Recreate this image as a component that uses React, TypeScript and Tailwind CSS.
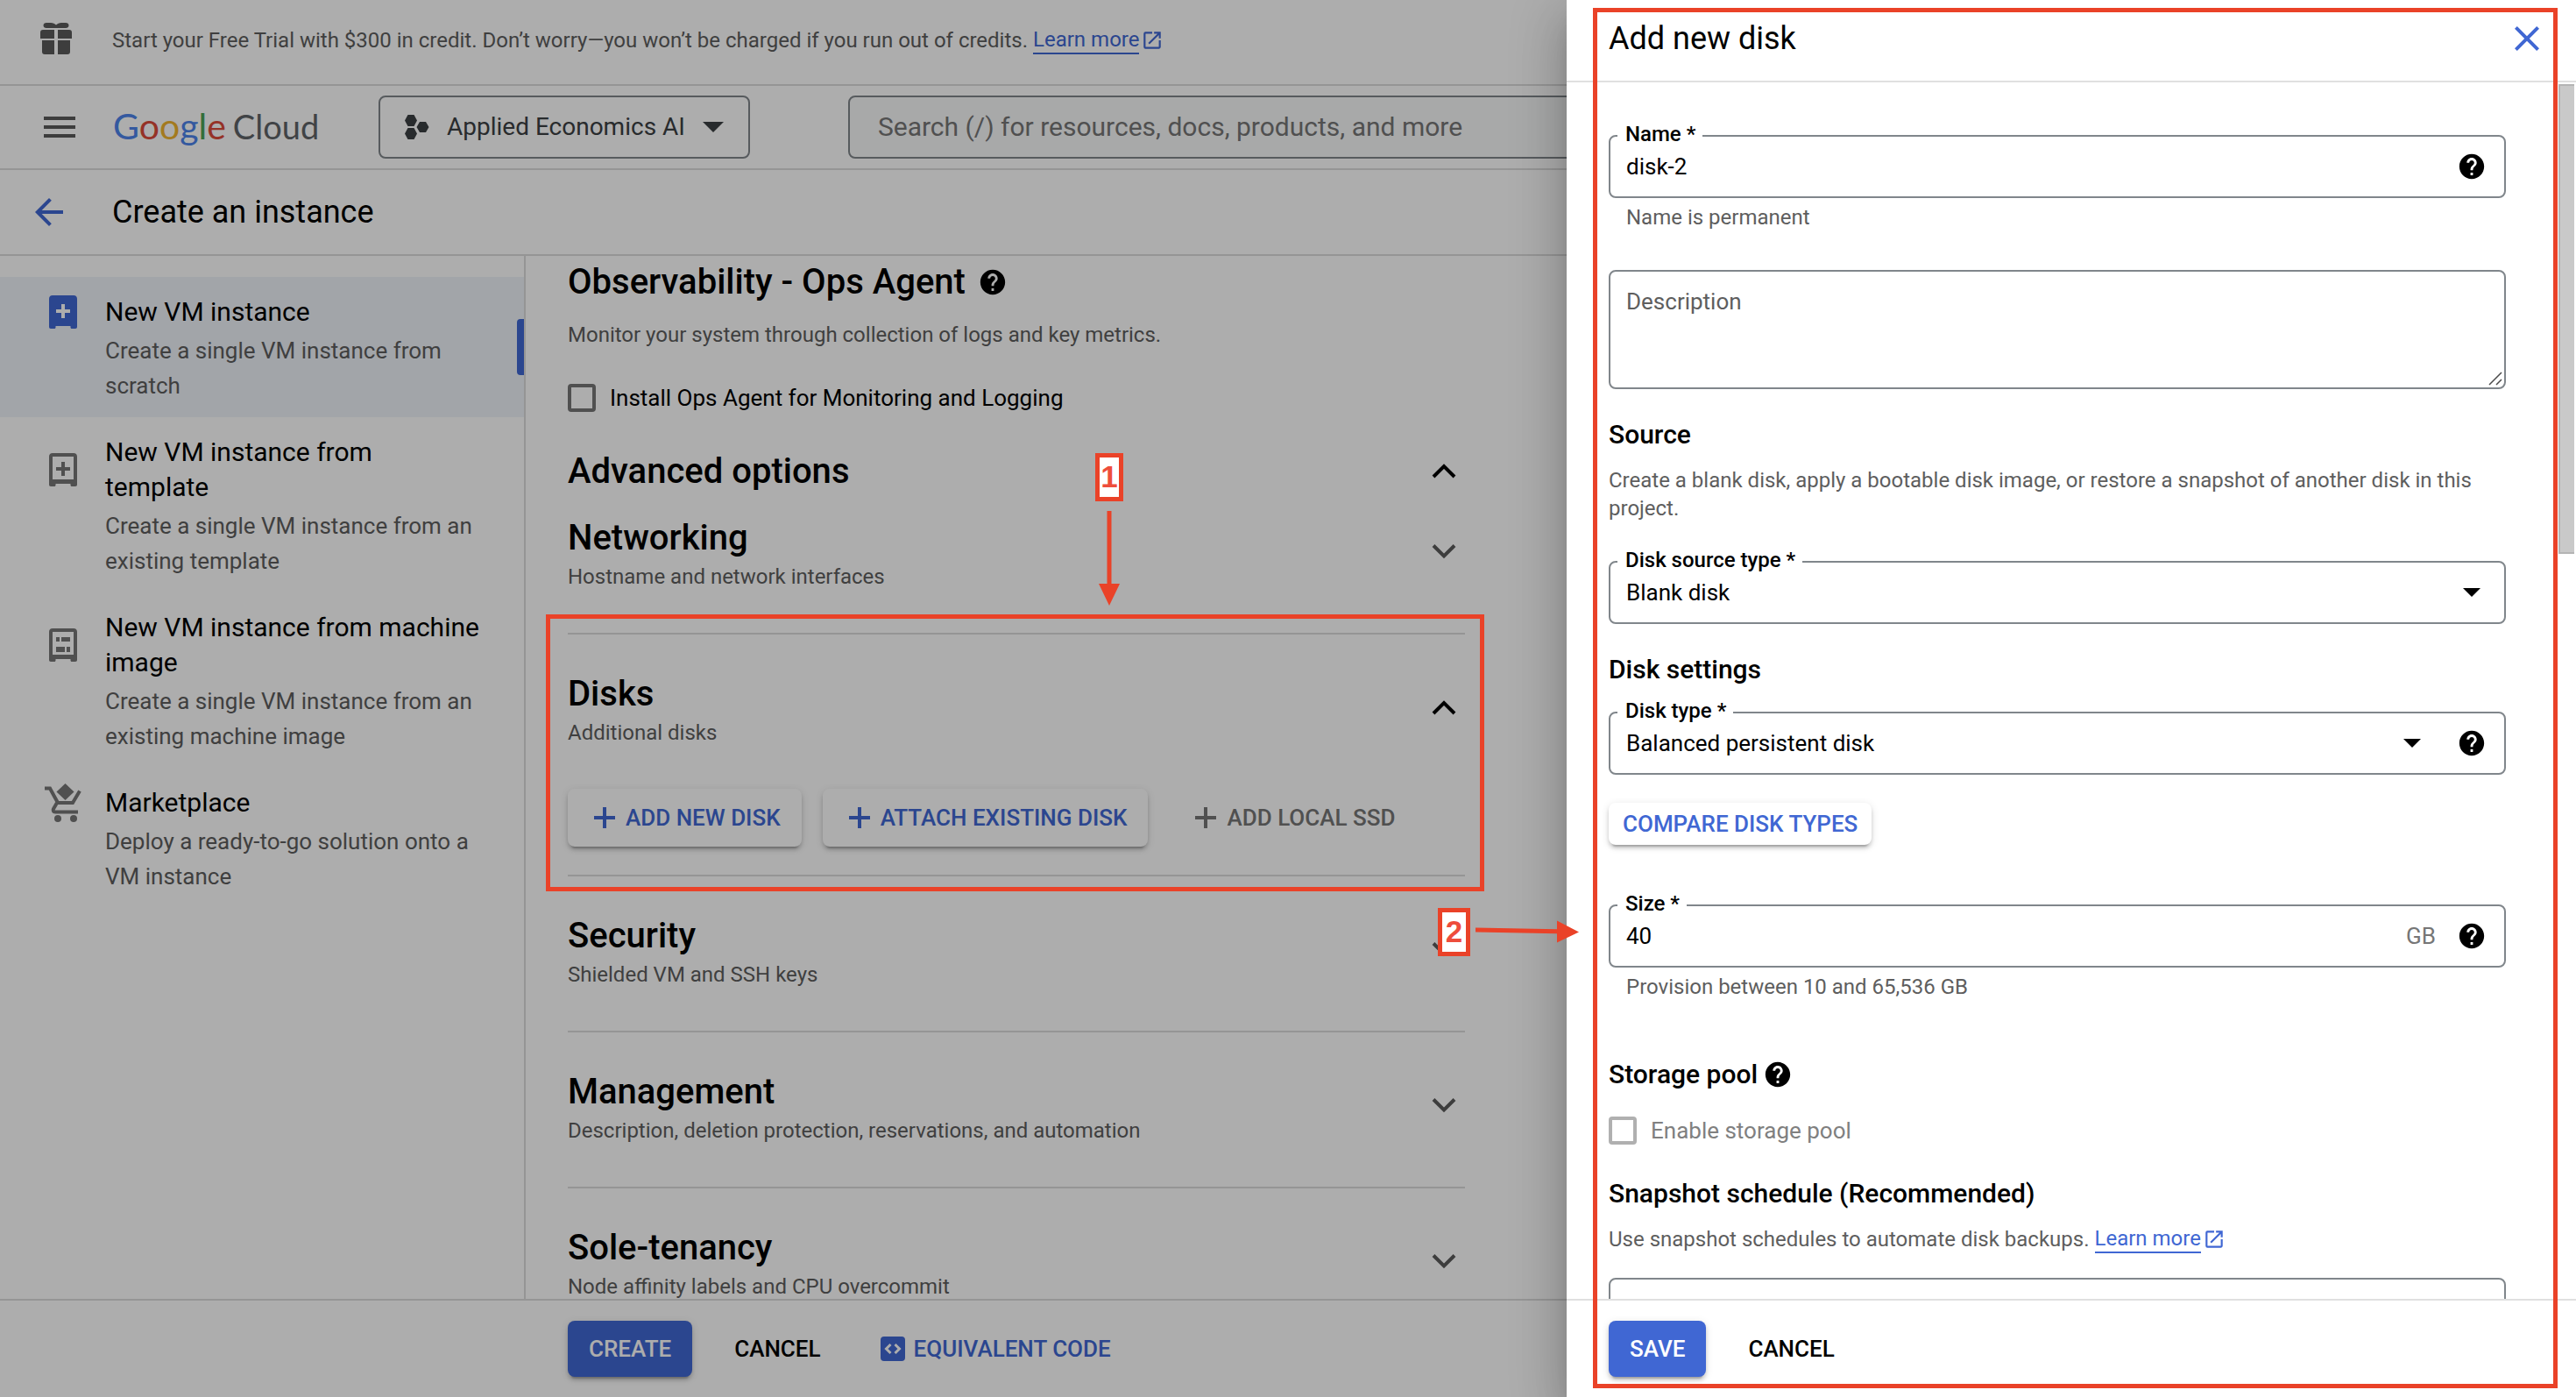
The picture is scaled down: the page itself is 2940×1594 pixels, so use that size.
import type { ReactNode } from "react";
import { MdArrowBack, MdClose, MdHelp, MdMenu, MdOpenInNew } from "react-icons/md";

const raised =
  "rounded-lg shadow-[0_6px_2px_-4px_rgba(0,0,0,0.2),0_4px_4px_0_rgba(0,0,0,0.14),0_2px_10px_0_rgba(0,0,0,0.12)]";

function GiftIcon() {
  return (
    <svg viewBox="0 0 36 36" className="size-9 shrink-0 fill-[#5b5b5b]" aria-hidden="true">
      <path d="M7 0h5c2.500 0 4.500 1 6 2.500C19.500 1 21.500 0 24 0h5c2 0 3.500 1.200 3.500 3S31 6 29 6H7C5 6 3.500 4.800 3.500 3S5 0 7 0z" />
      <path d="M3 8h13v10H0v-7c0-2 1-3 3-3zM20 8h13c2 0 3 1 3 3v7H20z" />
      <path d="M2 20h14v16H5c-2 0-3-1-3-3zM20 20h14v13c0 2-1 3-3 3H20z" />
    </svg>
  );
}

function ProjectIcon() {
  return (
    <svg viewBox="0 0 28 28" className="size-7 fill-[#3c4043]" aria-hidden="true">
      <path d="M3.500 0h7L14 6.500 10.500 13h-7L0 6.500zM3.500 15h7L14 21.500 10.500 28h-7L0 21.500zM17 8h7l3.500 6-3.500 6h-7l-3.500-6z" />
    </svg>
  );
}

function Caret({ className }: { className: string }) {
  return (
    <svg viewBox="0 0 20 10" className={className} aria-hidden="true">
      <path d="M0 0h20L10 10z" />
    </svg>
  );
}

function VmIcon({ kind }: { kind: "solid" | "plus" | "image" }) {
  return (
    <svg viewBox="0 0 32 38" className="h-[38px] w-8" aria-hidden="true">
      {kind === "solid" ? (
        <>
          <path
            fill="#4067d3"
            d="M4 0h24c2.500 0 4 1.500 4 4v32c0 1.300-.7 2-2 2h-4c-1 0-1.500-.6-1.500-1.500V35h-17v1.500c0 .9-.5 1.500-1.500 1.500H2c-1.300 0-2-.7-2-2V4c0-2.500 1.500-4 4-4z"
          />
          <path fill="#fff" d="M14 10h4v6h6v4h-6v6h-4v-6H8v-4h6z" />
        </>
      ) : (
        <path
          fill="#767676"
          fillRule="evenodd"
          d="M4 0h24c2.500 0 4 1.500 4 4v32c0 1.300-.7 2-2 2h-4c-1 0-1.500-.6-1.500-1.500V35h-17v1.500c0 .9-.5 1.500-1.500 1.500H2c-1.300 0-2-.7-2-2V4c0-2.500 1.500-4 4-4zM4 4v26h24V4z"
        />
      )}
      {kind === "plus" && <path fill="#767676" d="M14 10h4v6h6v4h-6v6h-4v-6H8v-4h6z" />}
      {kind === "image" && <path fill="#767676" d="M8 10h4v5H8zM14 10h10v5H14zM8 21h10v6H8zM20 21h4v6h-4z" />}
    </svg>
  );
}

function CartIcon() {
  return (
    <svg viewBox="0 0 42 44" className="h-11 w-[42px]" fill="none" aria-hidden="true">
      <path d="M0 5.500h6L15 22h17l8-13.500" stroke="#767676" strokeWidth="4" />
      <path d="M14 22l-4 7c-1 2 0 3.500 2 3.500h26" stroke="#767676" strokeWidth="4" />
      <path d="M23.500 0l10 9.500-10 9.500-10-9.500z" fill="#767676" />
      <circle cx="15" cy="40" r="4" fill="#767676" />
      <circle cx="33" cy="40" r="4" fill="#767676" />
    </svg>
  );
}

function PlusIcon() {
  return (
    <svg viewBox="0 0 24 24" className="size-6 fill-current" aria-hidden="true">
      <path d="M10 0h4v10h10v4H14v10h-4V14H0v-4h10z" />
    </svg>
  );
}

function Chevron({ open }: { open?: boolean }) {
  return (
    <svg viewBox="0 0 28 18" className="h-[18px] w-7" fill="none" strokeWidth="4" aria-hidden="true">
      {open ? <path d="M2 15l12-12 12 12" stroke="#000" /> : <path d="M2 1.500l12 12 12-12" stroke="#5b5b5b" />}
    </svg>
  );
}

function CodeIcon() {
  return (
    <svg viewBox="0 0 28 28" className="size-7" fill="none" aria-hidden="true">
      <rect width="28" height="28" rx="4" fill="#4067d3" />
      <path d="M11.500 9L6.500 14l5 5M16.500 9l5 5-5 5" stroke="#fff" strokeWidth="3" />
    </svg>
  );
}

function Help() {
  return <MdHelp className="size-[34px] shrink-0 text-black" aria-label="Help" />;
}

function LearnMore() {
  return (
    <a href="#learn-more" className="inline-flex items-center gap-[2px] text-[#4067d3]">
      <span className="border-b-2 border-[#4067d3] leading-[30px]">Learn more</span>
      <MdOpenInNew className="size-[26px]" />
    </a>
  );
}

function NavItem({
  icon,
  title,
  text,
  selected,
}: {
  icon: ReactNode;
  title: string;
  text: string;
  selected?: boolean;
}) {
  return (
    <li className={selected ? "relative bg-[#eff3fa]" : "relative"}>
      <a href="#vm" className="grid grid-cols-[48px_1fr] gap-x-6 gap-y-1 pt-5 pr-[49px] pb-4 pl-12">
        <span className="flex h-10 items-center justify-center self-center">{icon}</span>
        <span className="text-[30px] leading-10 text-black">{title}</span>
        <span className="col-start-2 text-[26px] leading-10 text-[#5e5e5e]">{text}</span>
      </a>
      {selected && <span className="absolute top-12 right-0 h-16 w-2 rounded-l bg-[#4067d3]" />}
    </li>
  );
}

function SectionHeader({ title, text, open }: { title: string; text: string; open?: boolean }) {
  return (
    <button type="button" aria-expanded={!!open} className="flex w-full items-start justify-between text-left">
      <span className="flex flex-col gap-2">
        <span className="text-[40px] leading-10 font-medium text-black">{title}</span>
        <span className="text-2xl leading-8 text-[#5e5e5e]">{text}</span>
      </span>
      <span className="mr-[10px] flex h-[72px] items-center">
        <Chevron open={open} />
      </span>
    </button>
  );
}

function Field({
  id,
  label,
  className,
  children,
}: {
  id: string;
  label: string;
  className: string;
  children: ReactNode;
}) {
  return (
    <div className={className}>
      <div className="relative flex h-[72px] items-center rounded-lg border-2 border-[#80868b] pr-5 pl-[18px] text-[26px]">
        <label
          htmlFor={id}
          className="absolute -top-[15px] left-2 bg-white pr-2 pl-[9px] text-2xl leading-6 font-medium text-black"
        >
          {label}
        </label>
        {children}
      </div>
    </div>
  );
}

const control = "min-w-0 flex-1 appearance-none bg-transparent text-black outline-none";

function Step({ n, className }: { n: number; className: string }) {
  return (
    <span
      className={`absolute z-30 flex h-[55px] items-center justify-center border-[5px] border-[#ea4228] bg-white pb-[2px] font-['Liberation_Sans',sans-serif] text-[35px] leading-none font-bold text-[#ee4d3c] ${className}`}
    >
      {n}
    </span>
  );
}

function DiskDrawer() {
  return (
    <aside
      role="dialog"
      aria-label="Add new disk"
      className="absolute inset-y-0 right-0 z-20 flex w-[1152px] flex-col bg-white shadow-[0_16px_20px_-10px_rgba(0,0,0,0.2),0_32px_48px_4px_rgba(0,0,0,0.14),0_12px_60px_10px_rgba(0,0,0,0.12)]"
    >
      <header className="flex h-[94px] shrink-0 items-center justify-between border-b-2 border-[#e0e0e0] pr-8 pb-1 pl-12">
        <h2 className="text-4xl text-black">Add new disk</h2>
        <button type="button" aria-label="Close" className="text-[#4067d3]">
          <MdClose className="size-12" />
        </button>
      </header>

      <div className="flex min-h-0 flex-1 overflow-hidden">
        <form className="flex min-w-0 flex-1 flex-col pt-[60px] pr-[60px] pl-12">
          <Field id="name" label="Name *" className="">
            <input id="name" defaultValue="disk-2" className={control} />
            <Help />
          </Field>
          <p className="mt-[6px] pl-5 text-2xl leading-8 text-[#5e5e5e]">Name is permanent</p>

          <div className="relative mt-11 h-[136px] shrink-0">
            <textarea
              aria-label="Description"
              placeholder="Description"
              className="block size-full resize-none rounded-lg border-2 border-[#80868b] px-[18px] py-4 text-[26px] leading-9 text-black outline-none placeholder:text-[#5e5e5e]"
            />
            <svg viewBox="0 0 16 16" className="absolute right-1 bottom-1 size-4" stroke="#4a4a4a" strokeWidth="1.500" aria-hidden="true">
              <path d="M1 15L15 1M9 15l6-6" />
            </svg>
          </div>

          <h3 className="mt-8 text-3xl leading-10 font-medium text-black">Source</h3>
          <p className="mt-4 text-2xl leading-8 text-[#5e5e5e]">
            Create a blank disk, apply a bootable disk image, or restore a snapshot of another disk in this project.
          </p>
          <Field id="source" label="Disk source type *" className="mt-11">
            <select id="source" className={control}>
              <option>Blank disk</option>
            </select>
            <span className="flex w-[34px] justify-center">
              <Caret className="h-[10px] w-5" />
            </span>
          </Field>

          <h3 className="mt-8 text-3xl leading-10 font-medium text-black">Disk settings</h3>
          <Field id="type" label="Disk type *" className="mt-7">
            <select id="type" className={control}>
              <option>Balanced persistent disk</option>
            </select>
            <span className="mr-[34px] flex w-[34px] justify-center">
              <Caret className="h-[10px] w-5" />
            </span>
            <Help />
          </Field>
          <button
            type="button"
            className={`mt-8 h-12 shrink-0 self-start px-4 text-[26px] font-medium text-[#4067d3] ${raised}`}
          >
            COMPARE DISK TYPES
          </button>

          <Field id="size" label="Size *" className="mt-[68px]">
            <input id="size" defaultValue="40" className={control} />
            <span className="mr-6 text-[#767676]">GB</span>
            <Help />
          </Field>
          <p className="mt-[6px] pl-5 text-2xl leading-8 text-[#5e5e5e]">Provision between 10 and 65,536 GB</p>

          <h3 className="mt-16 flex items-center gap-[6px] text-3xl leading-10 font-medium text-black">
            Storage pool <Help />
          </h3>
          <label className="mt-7 flex items-center gap-4 text-[26px] leading-8 text-[#808080]">
            <input type="checkbox" disabled className="size-8 appearance-none rounded border-4 border-[#b0b0b0]" />
            Enable storage pool
          </label>

          <h3 className="mt-9 text-3xl leading-10 font-medium text-black">Snapshot schedule (Recommended)</h3>
          <p className="mt-4 flex items-center gap-[6px] text-2xl leading-8 text-[#5e5e5e]">
            Use snapshot schedules to automate disk backups. <LearnMore />
          </p>
          <select
            aria-label="Snapshot schedule"
            className="mt-7 h-[72px] shrink-0 appearance-none rounded-lg border-2 border-[#80868b]"
          />
        </form>
        <div className="w-5 shrink-0 pt-[2px]">
          <div className="h-[536px] w-[18px] border-y-2 border-l-2 border-[#b4b4b4] bg-[#c9c9c9]" />
        </div>
      </div>

      <footer className="flex h-28 shrink-0 items-center gap-6 border-t-2 border-[#e0e0e0] bg-white pl-12 text-[26px] font-medium">
        <button type="button" className={`h-16 bg-[#4067d3] px-6 text-white ${raised}`}>
          SAVE
        </button>
        <button type="button" className="h-16 px-6 text-black">
          CANCEL
        </button>
      </footer>
      <div className="pointer-events-none absolute top-[9px] right-[21px] bottom-[10px] left-[30px] border-[5px] border-[#ea4228]" />
    </aside>
  );
}

export default function App() {
  return (
    <div className="relative flex h-screen flex-col overflow-hidden bg-white font-[Roboto,sans-serif] text-[#5e5e5e]">
      <div className="flex h-[98px] shrink-0 items-center border-b-2 border-[#dcdcdc] pb-2 pl-[46px] text-2xl">
        <GiftIcon />
        <p className="ml-[46px] flex items-center gap-[6px] pt-1">
          Start your Free Trial with $300 in credit. Don’t worry—you won’t be charged if you run out of credits.{" "}
          <LearnMore />
        </p>
      </div>

      <header className="flex h-24 shrink-0 items-center border-b-2 border-[#dcdcdc] pl-11">
        <button type="button" aria-label="Main menu">
          <MdMenu className="size-12 text-[#5b5b5b]" />
        </button>
        <a
          href="#home"
          aria-label="Google Cloud"
          className="ml-[37px] flex w-[231px] items-baseline gap-2 pb-[2px] font-[Lato,sans-serif] text-[41px] whitespace-nowrap"
        >
          <span>
            <span className="text-[#4d84ea]">G</span>
            <span className="text-[#dc4a3a]">o</span>
            <span className="text-[#f1b42f]">o</span>
            <span className="text-[#4d84ea]">g</span>
            <span className="text-[#4aa457]">l</span>
            <span className="text-[#dc4a3a]">e</span>
          </span>
          <span className="text-[38px] text-[#5f6368]">Cloud</span>
        </a>
        <button
          type="button"
          className="ml-[72px] flex h-[72px] shrink-0 items-center rounded-lg border-2 border-[#80868b] px-7 text-[28px] text-[#3c4043]"
        >
          <ProjectIcon />
          <span className="mr-5 ml-5">Applied Economics AI</span>
          <Caret className="h-3 w-6 fill-[#3c4043]" />
        </button>
        <input
          type="search"
          aria-label="Search"
          placeholder="Search (/) for resources, docs, products, and more"
          className="mr-96 ml-28 h-[72px] min-w-0 flex-1 rounded-lg border-2 border-[#80868b] bg-[#f8f9fa] px-8 pb-[2px] text-3xl outline-none placeholder:text-[#767676]"
        />
      </header>

      <div className="flex h-[98px] shrink-0 items-center gap-12 border-b-2 border-[#dcdcdc] pl-8">
        <a href="#back" aria-label="Back" className="text-[#4067d3]">
          <MdArrowBack className="size-12" />
        </a>
        <h1 className="text-4xl text-black">Create an instance</h1>
      </div>

      <div className="flex min-h-0 flex-1">
        <nav className="w-[600px] shrink-0 border-r-2 border-[#dcdcdc] pt-6">
          <ul>
            <NavItem
              selected
              icon={<VmIcon kind="solid" />}
              title="New VM instance"
              text="Create a single VM instance from scratch"
            />
            <NavItem
              icon={<VmIcon kind="plus" />}
              title="New VM instance from template"
              text="Create a single VM instance from an existing template"
            />
            <NavItem
              icon={<VmIcon kind="image" />}
              title="New VM instance from machine image"
              text="Create a single VM instance from an existing machine image"
            />
            <NavItem icon={<CartIcon />} title="Marketplace" text="Deploy a ready-to-go solution onto a VM instance" />
          </ul>
        </nav>

        <main className="min-w-0 flex-1 overflow-hidden pt-[10px] pl-12">
          <div className="max-w-[1024px]">
            <h2 className="flex items-center gap-[14px] text-[40px] leading-10 font-medium text-black">
              Observability - Ops Agent <Help />
            </h2>
            <p className="mt-6 text-2xl leading-8">
              Monitor your system through collection of logs and key metrics.
            </p>
            <label className="mt-10 flex items-center gap-4 text-[26px] leading-8 text-black">
              <input type="checkbox" className="size-8 appearance-none rounded border-4 border-[#767676]" />
              Install Ops Agent for Monitoring and Logging
            </label>

            <button
              type="button"
              aria-expanded="true"
              className="mt-12 flex w-full items-center justify-between pr-[10px] text-[40px] leading-10 font-medium text-black"
            >
              Advanced options <Chevron open />
            </button>

            <section className="mt-9 pb-12">
              <SectionHeader title="Networking" text="Hostname and network interfaces" />
            </section>

            <section className="relative border-t-2 border-[#dcdcdc] pt-12 pb-8">
              <SectionHeader open title="Disks" text="Additional disks" />
              <div className="mt-12 flex gap-6 text-[26px] font-medium text-[#4067d3]">
                <button type="button" className={`flex h-[66px] items-center gap-3 pr-6 pl-[30px] ${raised}`}>
                  <PlusIcon /> ADD NEW DISK
                </button>
                <button type="button" className={`flex h-[66px] items-center gap-3 pr-6 pl-[30px] ${raised}`}>
                  <PlusIcon /> ATTACH EXISTING DISK
                </button>
                <button
                  type="button"
                  disabled
                  className="flex h-[66px] items-center gap-3 pr-6 pl-[30px] text-[#767676]"
                >
                  <PlusIcon /> ADD LOCAL SSD
                </button>
              </div>
              <div className="pointer-events-none absolute -top-[23px] -right-[22px] -bottom-[19px] -left-[25px] z-30 border-[5px] border-[#ea4228]" />
              <Step n={1} className="-top-[207px] left-[602px] w-8" />
              <svg
                viewBox="0 0 24 108"
                className="absolute -top-[141px] left-[606px] z-30 h-[108px] w-6 fill-[#ea4228]"
                aria-hidden="true"
              >
                <path d="M9.500 0h5v83H24l-12 25L0 83h9.500z" />
              </svg>
            </section>

            <section className="relative border-t-2 border-[#dcdcdc] pt-12 pb-12">
              <SectionHeader title="Security" text="Shielded VM and SSH keys" />
              <Step n={2} className="top-9 left-[993px] w-[37px]" />
              <svg
                viewBox="0 0 118 26"
                className="absolute top-[50px] left-[1036px] z-30 h-[26px] w-[118px] fill-[#ea4228]"
                aria-hidden="true"
              >
                <path d="M0 8.500l93 1.700V.5l25 13L93 25.500v-10.300L0 13.500z" />
              </svg>
            </section>
            <section className="border-t-2 border-[#dcdcdc] pt-12 pb-12">
              <SectionHeader title="Management" text="Description, deletion protection, reservations, and automation" />
            </section>
            <section className="border-t-2 border-[#dcdcdc] pt-12 pb-12">
              <SectionHeader title="Sole-tenancy" text="Node affinity labels and CPU overcommit" />
            </section>
          </div>
        </main>
      </div>

      <footer className="flex h-28 shrink-0 items-center gap-6 border-t-2 border-[#dcdcdc] pl-[648px] text-[26px] font-medium">
        <button type="button" className={`h-16 bg-[#4067d3] px-6 text-white ${raised}`}>
          CREATE
        </button>
        <button type="button" className="h-16 px-6 text-black">
          CANCEL
        </button>
        <button type="button" className="flex h-16 items-center gap-[10px] pl-5 text-[#4067d3]">
          <CodeIcon /> EQUIVALENT CODE
        </button>
      </footer>

      <div className="absolute inset-0 z-10 bg-black/32" />
      <DiskDrawer />
    </div>
  );
}
